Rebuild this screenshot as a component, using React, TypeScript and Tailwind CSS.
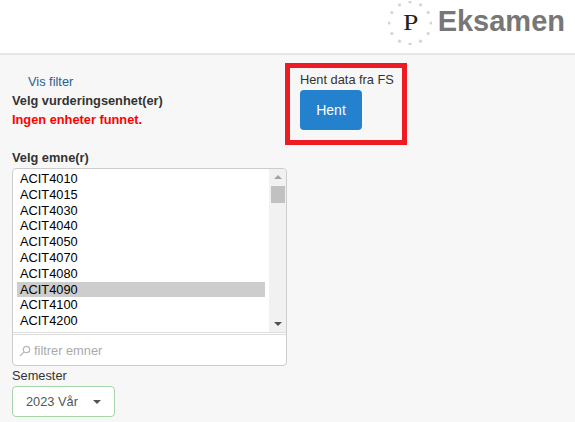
import React from 'react';

const courses = ['ACIT4010', 'ACIT4015', 'ACIT4030', 'ACIT4040', 'ACIT4050', 'ACIT4070', 'ACIT4080', 'ACIT4090', 'ACIT4100', 'ACIT4200', 'ACIT4300'];

function Logo() {
  const dots = Array.from({ length: 12 }, (_, i) => {
    const a = (i * Math.PI) / 6;
    return { x: 22 + 21 * Math.sin(a), y: 22 - 21 * Math.cos(a) };
  });
  return (
    <svg width="44" height="44" viewBox="0 0 44 44" className="shrink-0">
      {dots.map((d, i) => (
        <circle key={i} cx={d.x} cy={d.y} r="1.6" fill="#d4d4d4" />
      ))}
    </svg>
  );
}

export default function App() {
  return (
    <div className="h-[422px] w-[575px] overflow-hidden bg-[#f7f7f7] font-['Liberation_Sans',Arial,sans-serif] text-[12.8px] text-[#333]">
      <header className="flex h-[55px] items-start justify-end border-b-2 border-[#e7e7e7] bg-white pr-[10px]">
        <div className="relative mt-[1px] flex items-start">
          <Logo />
          <span className="absolute left-[15px] top-[8px] origin-left scale-x-[1.15] font-['Liberation_Serif',serif] text-[24px] leading-[26px] text-[#222]">P</span>
          <span className="ml-[6px] mt-[3px] text-[29px] font-bold leading-[34px] text-[#777]">Eksamen</span>
        </div>
      </header>

      <main className="flex pl-[12px]">
        <section className="flex w-[273px] flex-col">
          <a className="ml-[16px] mt-[19px] leading-[16px] text-[#2b5f8a]">Vis filter</a>
          <label className="mt-[3px] font-bold leading-[16px]">Velg vurderingsenhet(er)</label>
          <p className="mt-[3px] font-bold leading-[16px] text-[#ff0000]">Ingen enheter funnet.</p>

          <label className="mt-[22px] font-bold leading-[16px]">Velg emne(r)</label>
          <div className="mt-[2px] w-[275px] overflow-hidden rounded-[4px] border border-[#ccc] bg-white">
            <div className="flex h-[164px] border-b border-[#ddd]">
              <ul className="h-full flex-1 overflow-hidden px-[4px] pt-[2px] text-black">
                {courses.map((c) => (
                  <li key={c} className={`h-[15.8px] pl-[3px] leading-[15.8px] ${c === 'ACIT4090' ? 'bg-[#cdcdcd]' : ''}`}>
                    {c}
                  </li>
                ))}
              </ul>
              <div className="flex w-[17px] flex-col items-center bg-[#f1f1f1]">
                <div className="mt-[6px] h-0 w-0 border-x-[4px] border-b-[4px] border-x-transparent border-b-[#a3a3a3]" />
                <div className="mt-[7px] h-[17px] w-[14px] bg-[#c1c1c1]" />
                <div className="mt-auto mb-[6px] h-0 w-0 border-x-[4px] border-t-[4px] border-x-transparent border-t-[#505050]" />
              </div>
            </div>
            <div className="mt-[1px] flex h-[31px] items-center gap-[3px] border-t border-[#ddd] pl-[6px] pt-[2px] text-[#aaa]">
              <svg width="12" height="12" viewBox="0 0 12 12" fill="none" stroke="#bbb" strokeWidth="1.3">
                <circle cx="7.5" cy="4.5" r="3.2" />
                <path d="M5 7L1 11" />
              </svg>
              filtrer emner
            </div>
          </div>
          <label className="mt-[2px] leading-[16px]">Semester</label>
          <button className="mt-[2px] flex h-[31px] w-[103px] items-center rounded-[4px] border border-[#a5d6a7] bg-white pl-[13px] text-[#555]">
            2023 Vår
            <span className="ml-[15px] h-0 w-0 border-x-[4px] border-t-[4px] border-x-transparent border-t-[#555]" />
          </button>
        </section>

        <section className="mt-[8px] flex h-[82px] w-[122px] flex-col border-[5px] border-[#ed1c24] pl-[10px]">
          <span className="mt-[4px] leading-[16px]">Hent data fra FS</span>
          <button className="mt-[2px] h-[40px] w-[62px] rounded-[4px] bg-[#2381ce] text-[14px] text-white">Hent</button>
        </section>
      </main>
    </div>
  );
}
